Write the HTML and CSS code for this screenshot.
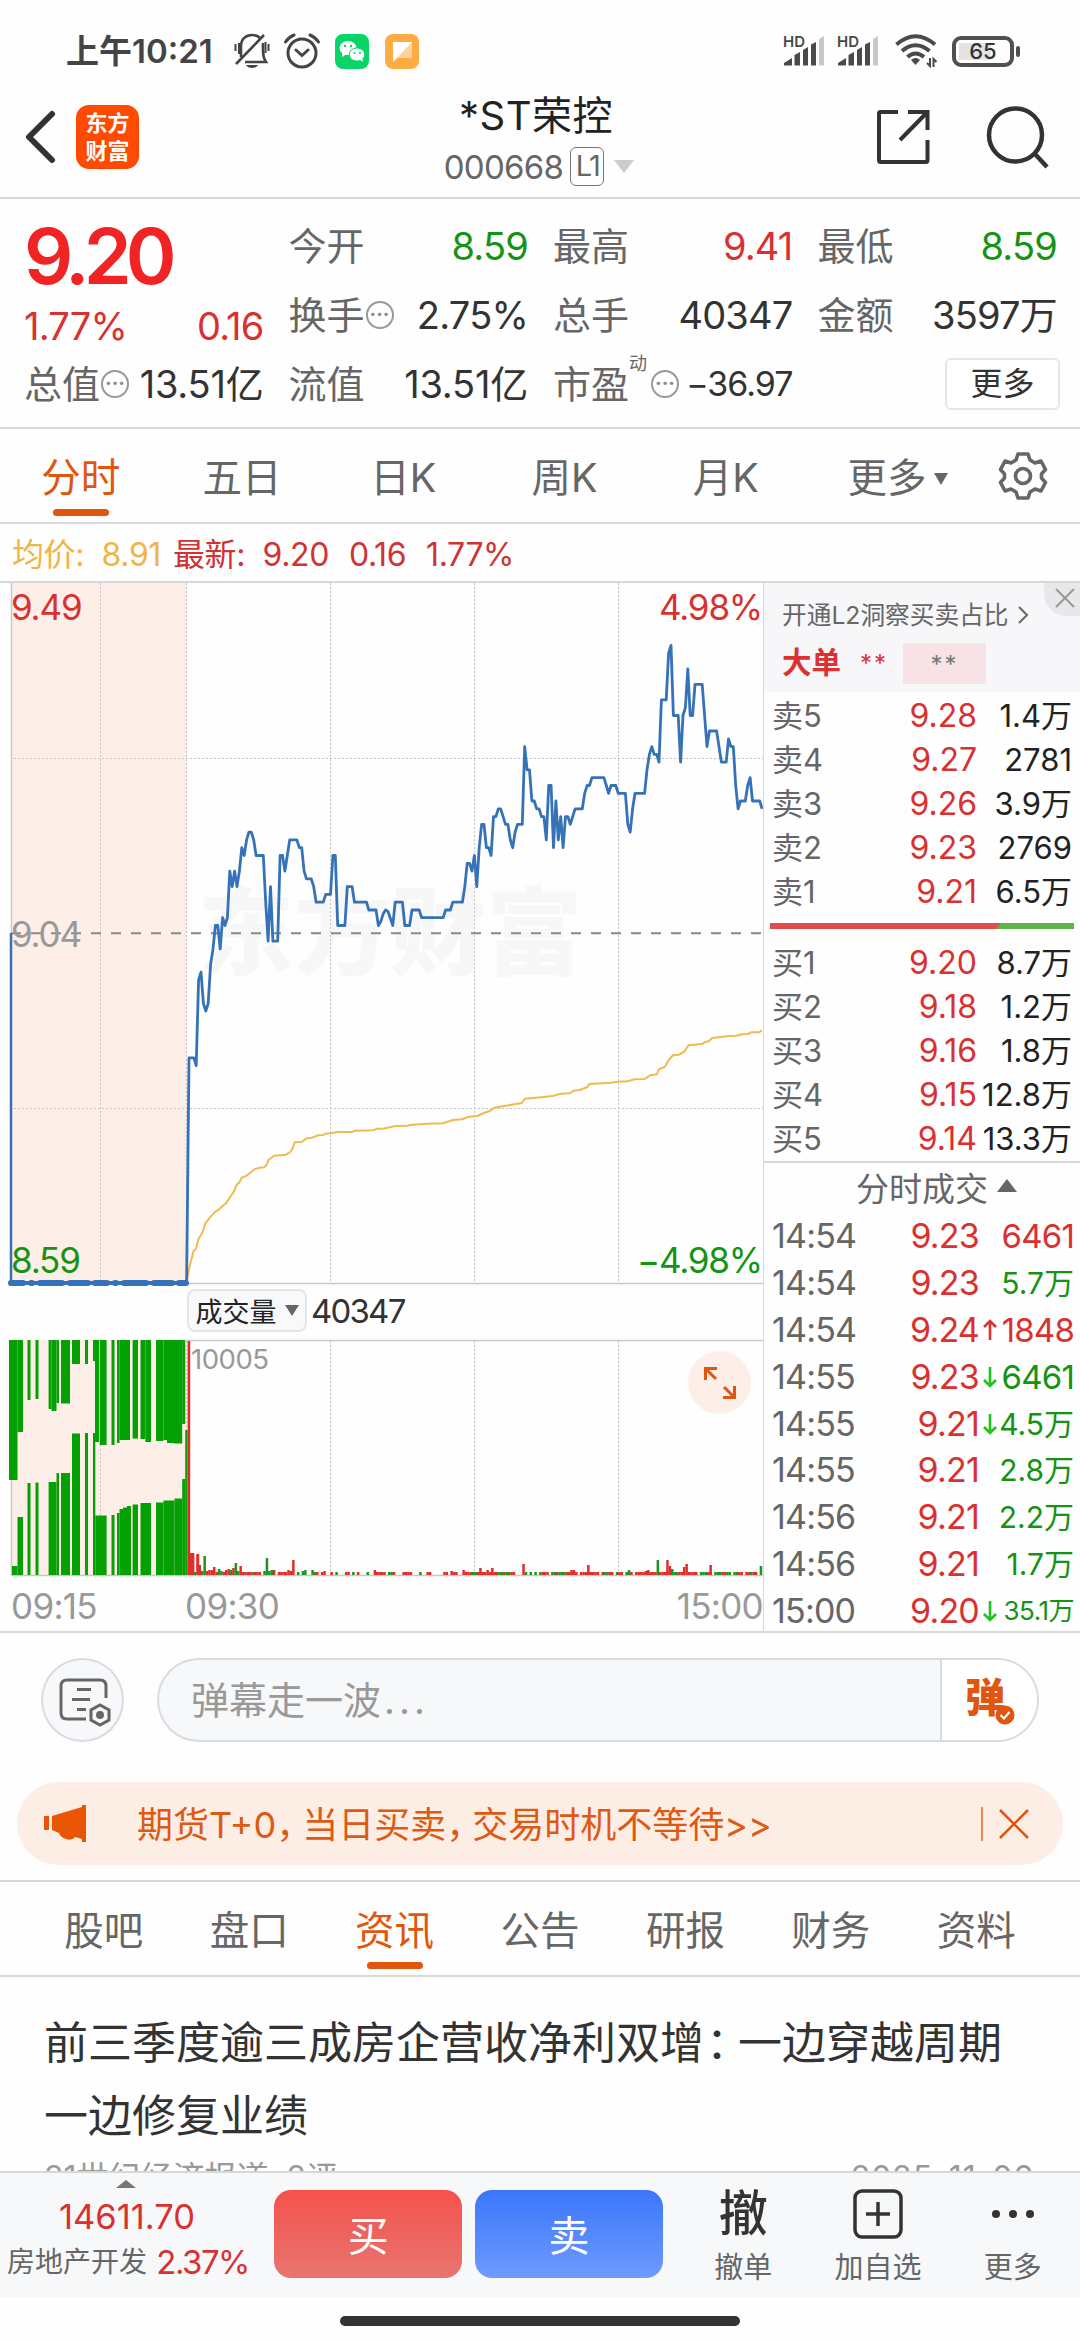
FILE: index.html
```html
<!DOCTYPE html>
<html lang="zh-CN">
<head>
    <meta charset="UTF-8">
    <meta name="viewport" content="width=device-width, initial-scale=1.0">
    <title>*ST荣控 000668</title>
    <link rel="stylesheet" href="styles.css">
</head>
<body>
    <div class="status-bar">
        <span class="clock">上午10:21</span>
        <svg class="bell" width="36" height="36" viewBox="0 0 36 36" fill="none" stroke="#444" stroke-width="2.6">
            <path d="M7 24 V13 C7 6 12 2 18 2 C21 2 24 3 26 5"/>
            <path d="M29 10 V18 C29 23 30 26 32 29 H11"/>
            <path d="M2 31 L30 2"/>
            <path d="M1.5 11 V18 M5 10 V21 M31.5 9 V20 M34.5 11 V18" stroke-width="2"/>
            <path d="M12 32 H24 C22 36 14 36 12 32 Z" fill="#444" stroke="none"/>
        </svg>
        <svg class="alarm" width="36" height="36" viewBox="0 0 36 36" fill="none" stroke="#444" stroke-width="3">
            <circle cx="18" cy="20" r="14"/>
            <path d="M12 17 L18 22.5 L24 17 M1.5 9 Q5 4 10 2 M34.500 9 Q31 4 26 2" stroke-linecap="round"/>
        </svg>
        <svg class="wechat" width="34" height="35" viewBox="0 0 34 35">
            <rect width="34" height="35" rx="8" fill="#08d468"/>
            <ellipse cx="13" cy="14" rx="8.500" ry="7" fill="#fff"/>
            <path d="M7 18 L7 23 L12 20 Z" fill="#fff"/>
            <ellipse cx="22" cy="20.500" rx="7.800" ry="6.600" fill="#fff" stroke="#08d468"/>
            <path d="M24 25 L28 28 L27 23 Z" fill="#fff"/>
            <g fill="#08d468"><circle cx="10" cy="12" r="1.200"/><circle cx="16" cy="12" r="1.200"/><circle cx="19.500" cy="19" r="1.100"/><circle cx="25" cy="19" r="1.100"/></g>
        </svg>
        <svg class="msg" width="34" height="35" viewBox="0 0 34 35">
            <rect width="34" height="35" rx="8" fill="#fdab43"/>
            <path d="M8 8 H27 V24 H12 L8 28 Z" fill="#fdd49c"/>
            <path d="M8 8 H27 L8 28 Z" fill="#fff"/>
        </svg>
        <div class="status-right">
            <svg class="signal" width="42" height="32" viewBox="0 0 42 32">
                <text x="0" y="12" class="hd">HD</text>
                <g fill="#4a4a4a"><path d="M1 30.500 V28 L9 23 V30.500 Z"/><path d="M11.500 30.500 V20 L17 17 V30.500 Z"/><path d="M20 30.500 V15 L25 12 V30.500 Z"/><path d="M28 30.500 V9.500 L33 7 V30.500 Z"/></g>
                <path d="M36 30.500 V4 L41 1 V30.500 Z" fill="#c8c8c8"/>
            </svg>
            <svg class="signal second" width="42" height="32" viewBox="0 0 42 32">
                <text x="0" y="12" class="hd">HD</text>
                <g fill="#4a4a4a"><path d="M1 30.500 V28 L9 23 V30.500 Z"/><path d="M11.500 30.500 V20 L17 17 V30.500 Z"/><path d="M20 30.500 V15 L25 12 V30.500 Z"/><path d="M28 30.500 V9.500 L33 7 V30.500 Z"/></g>
                <path d="M36 30.500 V4 L41 1 V30.500 Z" fill="#c8c8c8"/>
            </svg>
            <svg class="wifi" width="42" height="34" viewBox="0 0 42 34" fill="none" stroke="#4a4a4a" stroke-width="4">
                <path d="M1.500 10.500 Q20.500 -6 40 10.500"/>
                <path d="M7 17 Q20.500 5.500 34.500 17"/>
                <path d="M12.500 23 Q20.500 16 29 23"/>
                <path d="M16 26 Q20.500 22 25 26 L20.500 31 Z" fill="#4a4a4a" stroke="none"/>
                <path d="M35 24 V32 L32 29 M38.500 33 V25 L41.500 28" stroke-width="2"/>
            </svg>
            <div class="battery"><span>65</span></div>
        </div>
    </div>

    <header>
        <svg class="back" width="32" height="54" viewBox="0 0 32 54" fill="none" stroke="#333" stroke-width="6" stroke-linecap="round" stroke-linejoin="round">
            <path d="M28 4 L5 27 L28 50"/>
        </svg>
        <div class="logo">东方<br>财富</div>
        <div class="stock-title">
            <h1>*ST荣控</h1>
            <div class="stock-code"><span class="num">000668</span><span class="level">L1</span><i class="tri-down"></i></div>
        </div>
        <svg class="share" width="54" height="56" viewBox="0 0 54 56" fill="none" stroke="#333" stroke-width="4">
            <path d="M22 3 H4.500 Q3 3 3 4.500 V51 Q3 53 4.500 53 H50 Q51.500 53 51.500 51 V31"/>
            <path d="M32 3 H51.500 V21 M51.500 3 L24 31"/>
        </svg>
        <svg class="search" width="64" height="64" viewBox="0 0 64 64" fill="none" stroke="#333" stroke-width="4.500">
            <circle cx="29.500" cy="30" r="26.500"/>
            <path d="M49 49 L61 62"/>
        </svg>
    </header>

    <section class="quote">
        <div class="big-price">9.20</div>
        <div class="cell q2"><label>今开</label><b class="green">8.59</b></div>
        <div class="cell q3"><label>最高</label><b class="red">9.41</b></div>
        <div class="cell q4"><label>最低</label><b class="green">8.59</b></div>
        <div class="cell change"><b class="red">1.77%</b><b class="red">0.16</b></div>
        <div class="cell"><label>换手<i class="more-dot">···</i></label><b>2.75%</b></div>
        <div class="cell"><label>总手</label><b>40347</b></div>
        <div class="cell"><label>金额</label><b>3597万</b></div>
        <div class="cell"><label>总值<i class="more-dot">···</i></label><b class="wide">13.51亿</b></div>
        <div class="cell"><label>流值</label><b class="wide">13.51亿</b></div>
        <div class="cell pe"><label>市盈<sup>动</sup><i class="more-dot">···</i></label><b class="small">−36.97</b></div>
        <div class="cell last"><button class="more-btn">更多</button></div>
    </section>

    <nav class="period">
        <span class="active">分时</span>
        <span>五日</span>
        <span>日K</span>
        <span>周K</span>
        <span>月K</span>
        <span class="more">更多<i></i></span>
        <svg class="gear" width="50" height="50" viewBox="0 0 50 50" fill="none" stroke="#666" stroke-width="3.600" stroke-linejoin="round">
            <path d="M20 3 H30 L32 9 L37 12 L43 10 L47.500 18.500 L43.500 23 V27 L47.500 31.500 L43 40 L37 38 L32 41 L30 47 H20 L18 41 L13 38 L7 40 L2.500 31.500 L6.500 27 V23 L2.500 18.500 L7 10 L13 12 L18 9 Z"/>
            <circle cx="25" cy="25" r="7.500"/>
        </svg>
    </nav>

    <div class="avg-row">
        <span class="avg">均价: 8.91</span>
        <span class="latest">最新: 9.20</span>
        <span class="latest">0.16</span>
        <span class="latest">1.77%</span>
    </div>

    <main class="board">
        <div class="charts">
            <svg id="priceChart" width="763" height="706" viewBox="0 583 763 706"></svg>
            <div class="vol-head">
                <span class="vol-btn">成交量<i></i></span>
                <span class="vol-num">40347</span>
            </div>
            <div class="vol-wrap">
                <svg id="volChart" width="763" height="238" viewBox="0 1339 763 238"></svg>
                <div class="expand">
                    <svg width="34" height="34" viewBox="0 0 34 34" fill="none" stroke="#e0560f" stroke-width="3">
                        <path d="M2.500 14 V2.500 H14 M3 3 L13 13 M31.500 20 V31.500 H20 M31 31 L21 21"/>
                    </svg>
                </div>
            </div>
            <div class="time-axis"><span>09:15</span><span class="open">09:30</span><span class="end">15:00</span></div>
        </div>

        <aside class="depth">
            <div class="l2">
                <div class="l2-tip">开通L2洞察买卖占比<svg width="12" height="20" viewBox="0 0 12 20" fill="none" stroke="#666" stroke-width="2"><path d="M2 2 L10 10 L2 18"/></svg></div>
                <div class="l2-row"><strong>大单</strong><span class="stars">**</span><span class="mask">**</span></div>
                <div class="l2-close"><svg width="20" height="20" viewBox="0 0 20 20" stroke="#999" stroke-width="2"><path d="M1 1 L19 19 M19 1 L1 19"/></svg></div>
            </div>
            <div class="orders">
                <div class="order"><span>卖5</span><b>9.28</b><em>1.4万</em></div>
                <div class="order"><span>卖4</span><b>9.27</b><em>2781</em></div>
                <div class="order"><span>卖3</span><b>9.26</b><em>3.9万</em></div>
                <div class="order"><span>卖2</span><b>9.23</b><em>2769</em></div>
                <div class="order"><span>卖1</span><b>9.21</b><em>6.5万</em></div>
            </div>
            <div class="ratio"><i></i></div>
            <div class="orders">
                <div class="order"><span>买1</span><b>9.20</b><em>8.7万</em></div>
                <div class="order"><span>买2</span><b>9.18</b><em>1.2万</em></div>
                <div class="order"><span>买3</span><b>9.16</b><em>1.8万</em></div>
                <div class="order"><span>买4</span><b>9.15</b><em>12.8万</em></div>
                <div class="order"><span>买5</span><b>9.14</b><em>13.3万</em></div>
            </div>
            <div class="deal-title">分时成交<i></i></div>
            <div class="deals">
                <div class="deal"><span>14:54</span><b>9.23</b><i></i><em class="red">6461</em></div>
                <div class="deal"><span>14:54</span><b>9.23</b><i></i><em class="green wan">5.7万</em></div>
                <div class="deal"><span>14:54</span><b>9.24</b><i><svg width="14" height="22" viewBox="0 0 14 22" fill="none" stroke="#e03030" stroke-width="2.600"><path d="M7 21 V2 M1 8 L7 2 L13 8"/></svg></i><em class="red">1848</em></div>
                <div class="deal"><span>14:55</span><b>9.23</b><i><svg width="14" height="22" viewBox="0 0 14 22" fill="none" stroke="#1cc41c" stroke-width="2.600"><path d="M7 1 V20 M1 14 L7 20 L13 14"/></svg></i><em class="green">6461</em></div>
                <div class="deal"><span>14:55</span><b>9.21</b><i><svg width="14" height="22" viewBox="0 0 14 22" fill="none" stroke="#1cc41c" stroke-width="2.600"><path d="M7 1 V20 M1 14 L7 20 L13 14"/></svg></i><em class="green wan">4.5万</em></div>
                <div class="deal"><span>14:55</span><b>9.21</b><i></i><em class="green wan">2.8万</em></div>
                <div class="deal"><span>14:56</span><b>9.21</b><i></i><em class="green wan">2.2万</em></div>
                <div class="deal"><span>14:56</span><b>9.21</b><i></i><em class="green wan">1.7万</em></div>
                <div class="deal"><span>15:00</span><b>9.20</b><i><svg width="14" height="22" viewBox="0 0 14 22" fill="none" stroke="#1cc41c" stroke-width="2.600"><path d="M7 1 V20 M1 14 L7 20 L13 14"/></svg></i><em class="green xs">35.1万</em></div>
            </div>
        </aside>
    </main>

    <div class="danmu">
        <div class="danmu-set">
            <svg width="52" height="50" viewBox="0 0 52 50" fill="none" stroke="#666" stroke-width="3">
                <path d="M27 41 H8 Q2 41 2 35 V8 Q2 2 8 2 H41 Q47 2 47 8 V20"/>
                <path d="M18 11.500 H32 M13 21.500 H31 M18 31.500 H27"/>
                <path d="M41 27 L50 32 V42 L41 47 L32 42 V32 Z"/>
                <circle cx="41" cy="37" r="2.500" fill="#666"/>
            </svg>
        </div>
        <div class="danmu-input">
            <span>弹幕走一波<i class="dots">...</i></span>
            <div class="danmu-switch">弹<svg width="20" height="20" viewBox="0 0 20 20"><circle cx="10" cy="10" r="9.500" fill="#e0560f"/><path d="M5.500 10 L9 13.500 L14.500 7" fill="none" stroke="#fff" stroke-width="2.200"/></svg></div>
        </div>
    </div>

    <div class="notice">
        <svg width="43" height="38" viewBox="0 0 43 38" fill="#ea5504">
            <path d="M0 11 H5 V25 H0 Z M8 11 L38 2 V0 H42 V37 H38 V34 L31 32 Q28 36 22 34 Q16 32 15 28 L8 25 Z"/>
        </svg>
        <p>期货T+0<i class="comma">，</i>当日买卖<i class="comma">，</i>交易时机不等待&gt;&gt;</p>
        <div class="notice-close"><svg width="30" height="30" viewBox="0 0 30 30" stroke="#e0560f" stroke-width="2.600"><path d="M1 1 L29 29 M29 1 L1 29"/></svg></div>
    </div>

    <nav class="info-tabs">
        <span>股吧</span>
        <span>盘口</span>
        <span class="active">资讯</span>
        <span>公告</span>
        <span>研报</span>
        <span>财务</span>
        <span>资料</span>
    </nav>

    <article class="news">
        <h2>前三季度逾三成房企营收净利双增<i class="colon">：</i>一边穿越周期<br>一边修复业绩</h2>
        <div class="news-meta"><span>21世纪经济报道&nbsp; 2评</span><span class="date">2025-11-06</span></div>
    </article>

    <footer>
        <div class="sector">
            <i class="tri-up"></i>
            <div class="sector-price">14611.70</div>
            <div class="sector-name">房地产开发 <b>2.37%</b></div>
        </div>
        <button class="trade buy">买</button>
        <button class="trade sell">卖</button>
        <div class="tool"><div class="tool-icon cancel">撤</div>撤单</div>
        <div class="tool wide">
            <div class="tool-icon"><svg width="50" height="50" viewBox="0 0 50 50" fill="none" stroke="#333" stroke-width="3.500"><rect x="2" y="2" width="46" height="46" rx="7"/><path d="M25 13 V37 M13 25 H37"/></svg></div>加自选
        </div>
        <div class="tool">
            <div class="tool-icon"><svg width="44" height="10" viewBox="0 0 44 10" fill="#333"><circle cx="5" cy="5" r="4"/><circle cx="22" cy="5" r="4"/><circle cx="39" cy="5" r="4"/></svg></div>更多
        </div>
    </footer>
    <div class="home-bar"></div>

    <script src="script.js"></script>
</body>
</html>
```

FILE: styles.css
```css
* {
    box-sizing: border-box;
}

body {
    margin: 0;
    width: 1080px;
    height: 2340px;
    overflow: hidden;
    background-color: #fefefe;
    color: #333;
    font-family: Inter, "Noto Sans CJK SC", sans-serif;
    display: flex;
    flex-direction: column;
}

i, em {
    font-style: normal;
}

b {
    font-weight: 400;
}

svg {
    display: block;
    flex: none;
}

.red {
    color: #d93030;
}

.green {
    color: #159315;
}

/* status bar */
.status-bar {
    height: 90px;
    padding: 12px 60px 0 66px;
    display: flex;
    align-items: center;
    flex: none;
}

.clock {
    width: 168px;
    font-size: 33px;
    font-weight: 600;
    color: #444;
    line-height: 40px;
    white-space: nowrap;
}

.alarm {
    margin-left: 14px;
}

.wechat {
    margin-left: 15px;
}

.msg {
    margin-left: 16px;
}

.status-right {
    margin-left: auto;
    display: flex;
    align-items: center;
}

.signal {
    overflow: visible;
}

.hd {
    font-size: 15px;
    font-weight: 600;
    fill: #4a4a4a;
}

.second {
    margin-left: 12px;
}

.wifi {
    margin-left: 16px;
}

.battery {
    position: relative;
    width: 62px;
    height: 31px;
    margin: 0 6px 0 15px;
    border: 4px solid #505050;
    border-radius: 9px;
    background: linear-gradient(#e4e4e4, #e4e4e4) 3px 3px / 32px 17px no-repeat;
    font-size: 22px;
    font-weight: 500;
    line-height: 23px;
    text-align: center;
}

.battery::after {
    content: "";
    position: absolute;
    right: -10px;
    top: 6px;
    width: 4px;
    height: 11px;
    border-radius: 2px;
    background-color: #505050;
}

/* header */
header {
    height: 109px;
    padding: 2px 30px 10px 24px;
    display: flex;
    align-items: center;
    border-bottom: 2px solid #d8d8d8;
    flex: none;
}

header svg,
header .logo {
    margin-bottom: 6px;
}

.logo {
    width: 63px;
    height: 64px;
    margin-left: 20px;
    padding-top: 4px;
    border-radius: 13px;
    background-color: #ff4a02;
    color: #fff;
    font-size: 22px;
    font-weight: 700;
    line-height: 28px;
    text-align: center;
}

.stock-title {
    flex: 1;
    margin-left: 61px;
    padding-right: 4px;
    text-align: center;
}

.stock-title h1 {
    margin: 0 0 4px;
    font-size: 40px;
    font-weight: 400;
    line-height: 50px;
    color: #222;
    letter-spacing: 0.5px;
}

.stock-code {
    display: flex;
    justify-content: center;
    align-items: center;
    height: 44px;
    padding-left: 6px;
    font-size: 33px;
    color: #666;
    letter-spacing: -0.7px;
}

.level {
    width: 34px;
    height: 39px;
    margin: 0 10px 0 7px;
    border: 1.5px solid #777;
    border-radius: 6px;
    font-size: 29px;
    line-height: 36px;
    letter-spacing: -2px;
}

.tri-down {
    border: 10px solid transparent;
    border-top: 13px solid #ccc;
    border-bottom: none;
}

.search {
    margin-left: 56px;
}

/* quote */
.quote {
    height: 230px;
    padding: 12px 23px 0 24px;
    display: grid;
    grid-template-columns: repeat(4, 239.500px);
    grid-template-rows: repeat(3, 69px);
    column-gap: 25px;
    border-bottom: 2px solid #d8d8d8;
    flex: none;
}

.big-price {
    font-size: 77px;
    font-weight: 600;
    line-height: 90px;
    color: #f02424;
    letter-spacing: -6px;
}

.cell {
    display: flex;
    justify-content: space-between;
    align-items: center;
    font-size: 38px;
    line-height: 56px;
    white-space: nowrap;
}

.cell label {
    display: flex;
    align-items: center;
    color: #666;
    font-size: 38px;
}

.cell b {
    letter-spacing: -0.8px;
}

.cell .wide {
    letter-spacing: -0.2px;
}

.cell .small {
    font-size: 34px;
    letter-spacing: -1px;
}

.change {
    padding-top: 22px;
}

.more-dot {
    width: 28px;
    height: 28px;
    margin-left: 1px;
    border: 2px solid #999;
    border-radius: 50%;
    color: #888;
    font-size: 20px;
    font-weight: 700;
    line-height: 23px;
    letter-spacing: 0;
    text-align: center;
}

.pe sup {
    width: 18px;
    margin-bottom: 40px;
    font-size: 18px;
    line-height: 20px;
    vertical-align: baseline;
}

.pe .more-dot {
    margin-left: 4px;
}

.last {
    justify-content: flex-end;
    margin-right: -3px;
}

.more-btn {
    width: 115px;
    height: 52px;
    border: 2px solid #e6e6e6;
    border-radius: 6px;
    background-color: #fff;
    color: #333;
    font-family: inherit;
    font-size: 32px;
    line-height: 46px;
    padding: 0;
}

/* period tabs */
.period {
    height: 95px;
    padding-right: 32px;
    display: flex;
    align-items: center;
    border-bottom: 2px solid #d8d8d8;
    color: #666;
    font-size: 39.500px;
    flex: none;
}

.period span {
    position: relative;
    width: 161.300px;
    padding-top: 6px;
    text-align: center;
    line-height: 87px;
}

.active {
    color: #e0560f;
}

.active::after {
    content: "";
    position: absolute;
    left: 50%;
    bottom: 6px;
    width: 56px;
    height: 7px;
    margin-left: -28px;
    border-radius: 4px;
    background-color: #e0560f;
}

.period .more {
    display: flex;
    justify-content: center;
    align-items: center;
    width: 183px;
}

.period .more i {
    margin-left: 8px;
    border: 7px solid transparent;
    border-top: 12px solid #666;
    border-bottom: none;
}

.period .gear {
    margin-left: auto;
}

.avg-row {
    height: 57px;
    padding: 5px 0 0 12px;
    display: flex;
    align-items: center;
    font-size: 32px;
    line-height: 50px;
    letter-spacing: -0.4px;
    word-spacing: 9px;
    flex: none;
    color: #cf3333;
}

.avg {
    width: 161px;
    color: #efb546;
}

.latest {
    margin-right: 20px;
}

/* chart board */
.board {
    height: 1052px;
    display: flex;
    border-top: 2px solid #d8d8d8;
    border-bottom: 2px solid #d8d8d8;
    flex: none;
}

.charts {
    width: 763px;
}

.axis-label {
    font-size: 35px;
    letter-spacing: -1.2px;
}

.watermark {
    font-size: 96px;
    font-weight: 900;
    fill: #f7f7f7;
}

.vol-head {
    height: 50px;
    padding-left: 187px;
    display: flex;
    align-items: flex-start;
}

.vol-btn {
    width: 120px;
    height: 43px;
    display: flex;
    align-items: center;
    justify-content: center;
    border: 2px solid #e3e6e9;
    border-radius: 8px;
    background-color: #f8f9fb;
    color: #222;
    font-size: 27px;
}

.vol-btn i {
    margin-left: 8px;
    border: 7px solid transparent;
    border-top: 11px solid #666;
    border-bottom: none;
}

.vol-num {
    margin-left: 4px;
    font-size: 33px;
    line-height: 45px;
    letter-spacing: -1.8px;
}

.vol-wrap {
    position: relative;
}

.max-vol {
    font-size: 27.500px;
    fill: #999;
    letter-spacing: -0.5px;
}

.expand {
    position: absolute;
    left: 688px;
    top: 12px;
    width: 63px;
    height: 63px;
    border-radius: 50%;
    background-color: #fdefe7;
    display: flex;
    align-items: center;
    justify-content: center;
}

.time-axis {
    display: flex;
    padding: 9px 0 0 11px;
    color: #999;
    font-size: 35px;
    line-height: 40px;
    letter-spacing: -0.7px;
}

.time-axis span {
    width: 174px;
}

.time-axis .end {
    width: auto;
    margin-left: auto;
}

/* order book */
.depth {
    width: 317px;
    border-left: 1.500px solid #d8d8d8;
}

.l2 {
    position: relative;
    height: 109px;
    padding: 14px 0 0 18px;
    background-color: #f7f7fa;
}

.l2-tip {
    display: flex;
    align-items: center;
    color: #666;
    font-size: 24.700px;
    line-height: 36px;
    white-space: nowrap;
}

.l2-tip svg {
    margin-left: 8px;
}

.l2-row {
    display: flex;
    align-items: center;
    margin-top: 10px;
    height: 41px;
    color: #dd3030;
}

.l2-row strong {
    font-size: 29.500px;
    line-height: 38px;
    padding-bottom: 3px;
    width: 78px;
}

.stars, .mask {
    font-size: 24px;
    line-height: 44px;
    letter-spacing: 2px;
    width: 43px;
}

.mask {
    width: 83px;
    height: 41px;
    background-color: #f7e3e5;
    color: #777;
    text-align: center;
}

.l2-close {
    position: absolute;
    right: 0;
    top: 0;
    width: 36px;
    height: 33px;
    padding: 5px 0 0 11px;
    border-bottom-left-radius: 22px;
    background-color: #e8e8ea;
}

.orders {
    padding-top: 2px;
}

.order {
    height: 44px;
    padding: 0 8px;
    display: flex;
    font-size: 32px;
    line-height: 44px;
    color: #222;
}

.order span {
    width: 72px;
    font-size: 31px;
    color: #666;
}

.order b {
    width: 133px;
    text-align: right;
    color: #d93030;
}

.order em {
    flex: 1;
    text-align: right;
    white-space: nowrap;
    font-size: 31px;
}

.ratio {
    height: 6px;
    margin: 9px 6px 10px 6px;
    background-color: #5fb548;
}

.ratio i {
    display: block;
    width: 231px;
    height: 6px;
    background-color: #e04b4b;
    clip-path: polygon(0 0, 100% 0, 98% 100%, 0 100%);
}

.deal-title {
    height: 52px;
    display: flex;
    align-items: center;
    justify-content: center;
    border-top: 2px solid #d8d8d8;
    padding: 0 11px 2px 40px;
    color: #666;
    font-size: 33px;
}

.deal-title i {
    margin-left: 9px;
    margin-bottom: 4px;
    border: 10px solid transparent;
    border-bottom: 13px solid #666;
    border-top: none;
}

.deal {
    height: 46.800px;
    padding: 0 6px 0 8px;
    display: flex;
    align-items: center;
    font-size: 34px;
    letter-spacing: -0.8px;
    line-height: 46px;
}

.deal span {
    width: 90px;
    color: #666;
}

.deal b {
    width: 117px;
    text-align: right;
    color: #d93030;
}

.deal i {
    width: 14px;
    margin-left: 4px;
}

.deal em {
    flex: 1;
    font-size: 33px;
    text-align: right;
    white-space: nowrap;
}

.deal .wan {
    font-size: 30px;
    letter-spacing: 0;
}

.deal .xs {
    font-size: 26px;
    letter-spacing: -0.5px;
}

/* bullet comments */
.danmu {
    margin: 25px 41px 0;
    height: 84px;
    display: flex;
    flex: none;
}

.danmu-set {
    width: 83px;
    height: 84px;
    padding: 18px 0 0 16px;
    border: 2px solid #d8dbe0;
    border-radius: 50%;
    background-color: #f7f8fa;
}

.danmu-input {
    flex: 1;
    margin-left: 33px;
    display: flex;
    justify-content: space-between;
    border: 2px solid #d8dbe0;
    border-radius: 42px;
    background-color: #f7f8fa;
    overflow: hidden;
    color: #999;
    font-size: 38px;
    line-height: 81px;
}

.danmu-input span {
    padding-left: 32px;
}

.dots {
    margin-left: 3px;
    letter-spacing: 4px;
}

.danmu-switch {
    position: relative;
    width: 97px;
    padding-left: 23px;
    border-left: 2px solid #d8dbe0;
    background-color: #fff;
    color: #e0560f;
    font-size: 40px;
    font-weight: 900;
    line-height: 76px;
}

.danmu-switch svg {
    position: absolute;
    left: 53px;
    top: 45px;
}

.notice {
    margin: 40px 17px 0;
    height: 83px;
    padding: 0 34px 0 27px;
    display: flex;
    align-items: center;
    border-radius: 42px;
    background-color: #fdeee5;
    color: #dd5a14;
    flex: none;
}

.notice p {
    margin: 2px 0 0 50px;
    font-size: 36px;
    line-height: 60px;
    white-space: nowrap;
}

/* half-width punctuation with a little air after it */
.comma {
    font-feature-settings: "halt";
    margin-right: 8px;
}

.notice-close {
    margin-left: auto;
    padding: 2px 0 2px 16px;
    border-left: 2px solid #e88a58;
}

/* info tabs */
.info-tabs {
    margin-top: 15px;
    height: 97px;
    padding: 0 31px;
    display: flex;
    border-top: 2px solid #d8d8d8;
    border-bottom: 2px solid #d8d8d8;
    color: #666;
    font-size: 39.500px;
    line-height: 99px;
    flex: none;
}

.info-tabs span {
    position: relative;
    height: 93px;
    flex: 1;
    text-align: center;
}

/* news */
.news {
    height: 194px;
    padding: 30px 46px 0 44px;
    overflow: hidden;
    flex: none;
}

.news h2 {
    margin: 0;
    font-size: 44px;
    font-weight: 400;
    line-height: 73px;
    white-space: nowrap;
}

.colon {
    font-feature-settings: "halt";
    margin: 0 10px 0 2px;
}

.news-meta {
    display: flex;
    justify-content: space-between;
    margin-top: 2px;
    color: #999;
    font-size: 32px;
    line-height: 46px;
}

.date {
    letter-spacing: 0.9px;
}

/* bottom bar */
footer {
    height: 126px;
    display: flex;
    border-top: 2px solid #d8d8d8;
    background-color: #f7f8fa;
    flex: none;
}

.sector {
    width: 275px;
    padding: 7px 0 0 7px;
}

.tri-up {
    display: block;
    width: 20px;
    margin-left: 109px;
    border: 10px solid transparent;
    border-bottom: 8px solid #777;
    border-top: none;
}

.sector-price {
    margin-top: 8px;
    width: 240px;
    font-size: 34.500px;
    line-height: 42px;
    color: #d93030;
    text-align: center;
}

.sector-name {
    display: flex;
    justify-content: space-between;
    width: 242px;
    margin-top: 3px;
    font-size: 28px;
    line-height: 42px;
    color: #666;
    white-space: nowrap;
}

.sector-name b {
    color: #d93030;
    font-size: 33px;
    letter-spacing: -1.500px;
}

.trade {
    width: 188px;
    height: 88px;
    margin: 17px 13px 0 0;
    padding: 0 0 2px;
    border: none;
    border-radius: 17px;
    color: #fff;
    font-family: inherit;
    font-size: 41px;
}

.buy {
    background: linear-gradient(#f4524b, #e87470);
}

.sell {
    background: linear-gradient(#3b76fa, #6f9aff);
}

.tool {
    width: 135px;
    color: #666;
    font-size: 29px;
    line-height: 42px;
    text-align: center;
}

.tool-icon {
    height: 74px;
    padding-top: 8px;
    display: flex;
    align-items: center;
    justify-content: center;
    color: #333;
}

.cancel {
    font-size: 49px;
    font-weight: 500;
    line-height: 50px;
}

.home-bar {
    width: 400px;
    height: 10px;
    margin: 19px 0 0 340px;
    border-radius: 5px;
    background-color: #333;
    flex: none;
}
```

FILE: script.js
```javascript
// [minute after 09:30, price in cents]
const prices = [
    [0,859],[1,888],[3,888],[4,887],[5,898],[6,899],[7,895],[8,894],[9,895],[10,900],[11,902],[12,905],[13,905],[14,902],
    [15,906],[16,905],[17,906],[18,912],[19,910],[20,912],[21,910],[22,912],[23,915],[24,914],[25,916],[26,917],[27,917],
    [28,916],[29,914],[32,914],[33,908],[34,903],[35,910],[36,903],[38,903],[39,914],[40,914],[41,912],[42,914],[43,916],
    [46,916],[47,915],[48,915],[49,912],[50,911],[52,911],[53,910],[54,908],[57,908],[58,909],[60,909],[61,914],[62,914],
    [63,905],[66,905],[67,910],[69,910],[70,908],[75,908],[76,907],[79,907],[80,905],[81,905.5],[82,906.5],[83,907],[84,906.8],
    [86,905],[87,908],[90,908],[91,905],[93,905],[94,907],[97,907],[98,906],[107,906],[108,907],[110,907],[111,908],[115,908],
    [116,910],[117,913],[118,913],[119,912],[120,914],[121,910],[122,915],[123,918],[124,918],[125,915],[126,915],[127,914],
    [128,919],[129,919],[130,920],[131,920],[133,918],[134,918],[135,916],[136,915],[137,917],[138,918],[140,918],[141,928],
    [142,925],[143,925],[144,921],[145,921],[146,920],[147,920],[148,919],[149,919],[150,916],[151,923],[152,923],[153,915],
    [154,921],[155,916],[156,919],[157,915],[158,919],[159,919],[160,918],[161,919],[162,920],[165,920],[166,922],[167,923],
    [168,923],[169,924],[174,924],[175,923],[176,922],[177,923],[179,923],[180,922],[183,922],[184,918],[185,917],[186,920],
    [187,922],[191,922],[192,925],[193,927],[194,928],[195,927],[196,927],[197,926],[198,934],[200,934],[201,940],[202,941],
    [203,932],[205,932],[206,926],[207,932],[208,933],[209,938],[210,932],[211,932],[212,936],[215,936],[216,932],[217,928],
    [218,930],[221,930],[222,928],[223,926],[225,926],[226,929],[227,928],[228,928],[229,923],[230,920],[231,921],[233,921],
    [234,923],[235,924],[236,921],[239,921],[240,920]
];

const average = '186.6,1281.7 190,1265 193.5,1251 196,1249 198.4,1239.3 202.8,1231.7 205.3,1223.3 210.7,1216.7 215.1,1211.7 218.6,1210 222.5,1206 225.9,1203.3 230.8,1196 234.3,1190.7 236.7,1184.3 239.2,1182.7 241.7,1177.7 246.6,1175.7 254.4,1169.3 258.3,1168 264.2,1167.3 266.7,1165 268.2,1160.3 274.1,1155.7 285.9,1154.7 289.8,1152.3 292.2,1149.3 294.7,1142.3 301.6,1142 306.5,1138.3 311.4,1138 318.3,1135.3 323.2,1135 325.6,1133.7 330.6,1133.3 337.4,1132 352.2,1132 354.6,1130.7 373.3,1130.3 377.2,1128.7 383.1,1128.7 395.4,1126 407.7,1125.7 410,1125 427.3,1123.7 443,1123.3 452.8,1120 462.2,1119.3 468,1117 477.9,1115.7 483.8,1113 489.7,1111 494.6,1107.7 504.4,1106 521.6,1103 525,1098.7 543.7,1097 552.6,1096 560.9,1093.7 569.7,1093.3 573.7,1090.7 579.6,1090 586.9,1087.3 589.4,1084 611,1082.7 617.9,1081.7 627.7,1081.3 634.6,1079.3 644.4,1079 650.3,1075.3 656.7,1074.3 659,1069.3 665,1066.7 668,1061 672.9,1055.3 678.8,1054.7 684.2,1051.7 688.6,1045.3 701.9,1044 704.8,1042.3 708.7,1041.3 712.2,1038 729.4,1036 736.7,1035.7 741.7,1034.3 747.5,1034 751.5,1032.3 759.3,1032.3 761.8,1030.3';

const X0 = 186.6;
const STEP = 2.398;
const gridX = [100.5, 186.5, 330.5, 474.5, 618.5];

function dotted(x1, y1, x2, y2) {
    return `<path d="M${x1} ${y1}L${x2} ${y2}" stroke="#c4c4c4" stroke-width="1" stroke-dasharray="2 2"/>`;
}

function drawPrice() {
    const line = prices.map(p => (X0 + p[0] * STEP).toFixed(1) + ',' + (933.3 - (p[1] - 904) * 7.78).toFixed(1)).join(' ');
    let s = '<rect x="11" y="581" width="175.6" height="702" fill="#fdeee7"/>';
    s += '<text class="watermark" x="198" y="967">东方财富</text>';
    gridX.forEach(x => s += dotted(x, 583, x, 1283));
    s += dotted(14, 758.5, 763, 758.5) + dotted(14, 1108.5, 763, 1108.5);
    s += '<path d="M11.500 581V933M186 1283.500H763" stroke="#c8c8c8" stroke-width="1.500"/>';
    s += '<path d="M11 933.3H763" stroke="#888" stroke-width="2" stroke-dasharray="10 10"/>';
    s += '<text class="axis-label" x="11" y="620" fill="#d93030">9.49</text>';
    s += '<text class="axis-label" x="11" y="947" fill="#999">9.04</text>';
    s += '<text class="axis-label" x="11" y="1273" fill="#159315">8.59</text>';
    s += '<text class="axis-label" x="762" y="620" text-anchor="end" fill="#d93030">4.98%</text>';
    s += '<text class="axis-label" x="762" y="1273" text-anchor="end" fill="#159315">−4.98%</text>';
    s += `<polyline points="${average}" fill="none" stroke="#efbb50" stroke-width="2"/>`;
    s += '<path d="M11 933V1283" stroke="#3572b8" stroke-width="2.500"/>';
    s += '<path d="M9 1283H187" stroke="#3572b8" stroke-width="4"/>';
    s += '<path d="M11 1283H186" stroke="#3572b8" stroke-width="6" stroke-linecap="round" stroke-dasharray="12 8 1 8 22 8 18 7"/>';
    s += `<polyline points="${line}" fill="none" stroke="#3572b8" stroke-width="2.8" stroke-linejoin="round"/>`;
    document.getElementById('priceChart').innerHTML = s;
}

// call auction bars: [x1, x2, bottom edge of the upper bar]
const upper = [[9,17.5,1480],[17.5,23,1432],[27.5,30.5,1400],[35.5,38.5,1399],[48.6,51.5,1409],[51.5,56.5,1411],[56.5,59,1403],[61,70,1403.5],[72,80,1364],[85,88,1364],[93,95,1361],[95,99,1442],[99.7,106.6,1445],[111.5,114.5,1445],[117,119.5,1443],[119.5,130,1440],[132.600,138,1438.6],[140.500,145.400,1439],[145.4,151,1442],[156,163.5,1441],[163.5,167,1440],[167,174,1443],[174,182.2,1443.5],[182.2,185.2,1424]];
// [x1, x2, top edge of the lower bar]
const lower = [[12,17.5,1566],[17.5,23,1517],[27.5,30.5,1483],[35.5,38.5,1482.5],[48.6,56.5,1482],[56.5,59,1473],[61,70,1473],[72,80,1433.5],[85,88,1433],[93,95.3,1433],[95.3,106.6,1515.5],[111.5,114.5,1515],[117,119.5,1513],[119.5,123,1509],[123,127,1507.5],[127,131,1506],[132.6,138,1504.5],[140.5,151,1503],[156,163.5,1502.5],[163.5,174.5,1500.5],[174.5,182.2,1498.5],[182.2,185.2,1479],[185.2,187.6,1430]];

// [minute, height, colour]
const vol = [
    [1,22,'r'],[2,22,'r'],[3,3,'g'],[4,21,'r'],[5,10,'r'],[6,4,'g'],[7,19,'g'],[8,4,'r'],[9,5,'r'],[10,5,'r'],[11,8,'r'],[12,3,'r'],
    [13,6,'g'],[14,4,'g'],[15,3,'r'],[16,5,'r'],[17,6,'r'],[18,5,'g'],[19,7,'r'],[20,12,'g'],[21,4,'g'],[22,9,'r'],[32,4,'g'],[33,17,'g'],
    [34,4,'g'],[35,5,'g'],[36,5,'r'],[42,5,'r'],[43,4,'r'],[44,15,'r'],[48,4,'g'],[49,5,'g'],[52,5,'g'],[57,4,'r'],[78,5,'r'],
    [110,4,'r'],[115,5,'r'],[122,7,'r'],[125,5,'r'],[127,7,'r'],[140,11,'r'],[160,5,'r'],[161,5,'r'],[167,10,'r'],[184,5,'g'],
    [191,4,'r'],[192,5,'r'],[196,15,'g'],[200,15,'r'],[201,9,'r'],[202,6,'g'],[207,8,'r'],[208,11,'r'],[218,10,'r'],[239,9,'g']
];
// low volume runs: [from, to, colour]
const runs = [
    [23,26,'r'],[27,27,'g'],[28,30,'r'],[38,41,'r'],[46,46,'g'],[53,53,'g'],[54,54,'r'],[56,56,'r'],[60,60,'r'],[62,62,'g'],
    [66,67,'r'],[69,69,'g'],[71,71,'r'],[75,75,'g'],[79,82,'r'],[84,85,'g'],[86,86,'r'],[90,93,'r'],[97,97,'g'],[100,101,'r'],
    [107,108,'r'],[111,112,'r'],[116,118,'r'],[119,120,'g'],[121,124,'r'],[126,129,'r'],[130,131,'g'],[132,132,'r'],[133,134,'g'],
    [135,136,'r'],[141,141,'g'],[143,143,'g'],[145,145,'g'],[147,147,'g'],[148,150,'r'],[152,153,'g'],[154,154,'r'],[155,157,'g'],
    [158,162,'r'],[164,171,'r'],[173,173,'r'],[174,175,'g'],[176,177,'r'],[179,179,'g'],[180,181,'r'],[183,184,'g'],[185,185,'r'],
    [187,195,'r'],[197,201,'r'],[203,204,'g'],[205,206,'r'],[209,212,'r'],[214,216,'g'],[217,218,'r'],[220,222,'g'],[223,224,'r'],
    [225,226,'g'],[228,229,'g'],[230,231,'r'],[233,234,'r'],[235,235,'g'],[236,237,'r']
];
const colours = { r: '#df2f2b', g: '#1f9420' };

function drawVolume() {
    let s = '<rect x="11" y="1340" width="175.6" height="235" fill="#fdeee7"/>';
    gridX.forEach(x => s += dotted(x, 1341, x, 1575));
    s += '<path d="M11.500 1341V1575M186 1340.500H763M11 1575.500H763" stroke="#c8c8c8" stroke-width="1.500"/>';
    upper.forEach(b => s += `<rect x="${b[0]}" y="1340" width="${b[1] - b[0]}" height="${b[2] - 1340}" fill="#04a004"/>`);
    lower.forEach(b => s += `<rect x="${b[0]}" y="${b[2]}" width="${b[1] - b[0]}" height="${1575 - b[2]}" fill="#04a004"/>`);
    s += '<rect x="187.6" y="1341" width="2.6" height="234" fill="#e02a2a"/>';
    const bar = (m, h, c) => `<rect x="${(X0 + m * STEP).toFixed(1)}" y="${1575 - h}" width="${h > 20 ? 3 : 2.5}" height="${h}" fill="${colours[c]}"/>`;
    runs.forEach(r => { for (let m = r[0]; m <= r[1]; m++) s += bar(m, 3, r[2]); });
    vol.forEach(v => s += bar(...v));
    s += '<text class="max-vol" x="191" y="1369">10005</text>';
    document.getElementById('volChart').innerHTML = s;
}

drawPrice();
drawVolume();
```
